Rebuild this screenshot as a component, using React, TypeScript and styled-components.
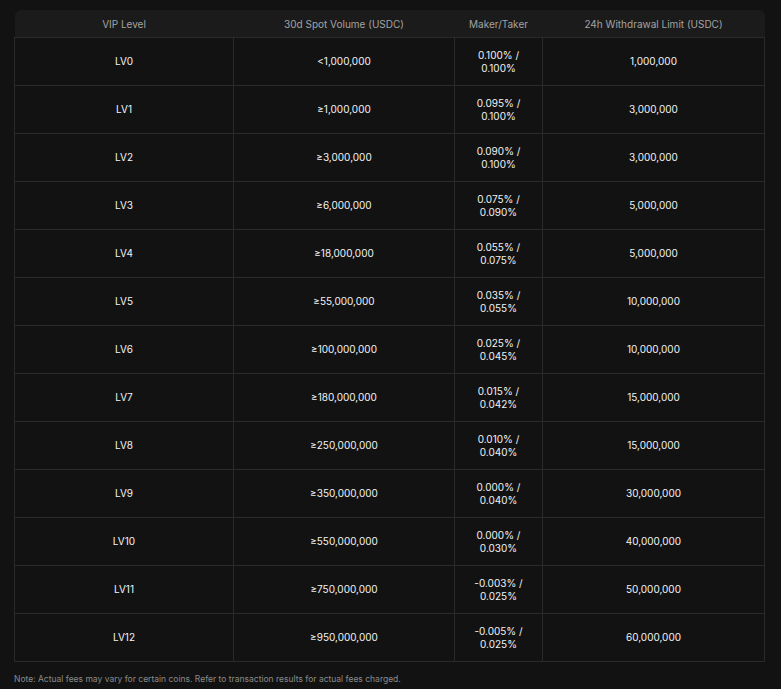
import React from 'react';
import styled, { createGlobalStyle } from 'styled-components';

const GlobalStyle = createGlobalStyle`
  body {
    margin: 0;
    background: #121212;
    font-family: Inter, "Liberation Sans", sans-serif;
  }
`;

const Page = styled.div`
  padding: 10px 17px 0 14px;
`;

const Table = styled.table`
  width: 750px;
  border-collapse: collapse;
  table-layout: fixed;
  font-size: 10px;
`;

const HeadCell = styled.th<{ $w: number }>`
  width: ${p => p.$w}px;
  height: 27px;
  padding: 0;
  background: #1b1b1b;
  color: #a3a3a3;
  font-weight: 400;
  text-align: center;
  &:first-child { border-top-left-radius: 6px; }
  &:last-child { border-top-right-radius: 6px; }
`;

const Cell = styled.td`
  height: 47px;
  padding: 0;
  border: 1px solid #2a2a2a;
  color: #f2f2f2;
  text-align: center;
  line-height: 13px;
`;

const Note = styled.p`
  margin: 12px 0 0 0;
  font-size: 8.5px;
  color: #8a8a8a;
`;

const rows = [
  ['LV0', '<1,000,000', '0.100%', '0.100%', '1,000,000'],
  ['LV1', '≥1,000,000', '0.095%', '0.100%', '3,000,000'],
  ['LV2', '≥3,000,000', '0.090%', '0.100%', '3,000,000'],
  ['LV3', '≥6,000,000', '0.075%', '0.090%', '5,000,000'],
  ['LV4', '≥18,000,000', '0.055%', '0.075%', '5,000,000'],
  ['LV5', '≥55,000,000', '0.035%', '0.055%', '10,000,000'],
  ['LV6', '≥100,000,000', '0.025%', '0.045%', '10,000,000'],
  ['LV7', '≥180,000,000', '0.015%', '0.042%', '15,000,000'],
  ['LV8', '≥250,000,000', '0.010%', '0.040%', '15,000,000'],
  ['LV9', '≥350,000,000', '0.000%', '0.040%', '30,000,000'],
  ['LV10', '≥550,000,000', '0.000%', '0.030%', '40,000,000'],
  ['LV11', '≥750,000,000', '-0.003%', '0.025%', '50,000,000'],
  ['LV12', '≥950,000,000', '-0.005%', '0.025%', '60,000,000'],
];

const App: React.FC = () => (
  <Page>
    <GlobalStyle />
    <Table>
      <thead>
        <tr>
          <HeadCell $w={219}>VIP Level</HeadCell>
          <HeadCell $w={221}>30d Spot Volume (USDC)</HeadCell>
          <HeadCell $w={88}>Maker/Taker</HeadCell>
          <HeadCell $w={222}>24h Withdrawal Limit (USDC)</HeadCell>
        </tr>
      </thead>
      <tbody>
        {rows.map(r => (
          <tr key={r[0]}>
            <Cell>{r[0]}</Cell>
            <Cell>{r[1]}</Cell>
            <Cell>{r[2]} /<br />{r[3]}</Cell>
            <Cell>{r[4]}</Cell>
          </tr>
        ))}
      </tbody>
    </Table>
    <Note>Note: Actual fees may vary for certain coins. Refer to transaction results for actual fees charged.</Note>
  </Page>
);

export default App;
